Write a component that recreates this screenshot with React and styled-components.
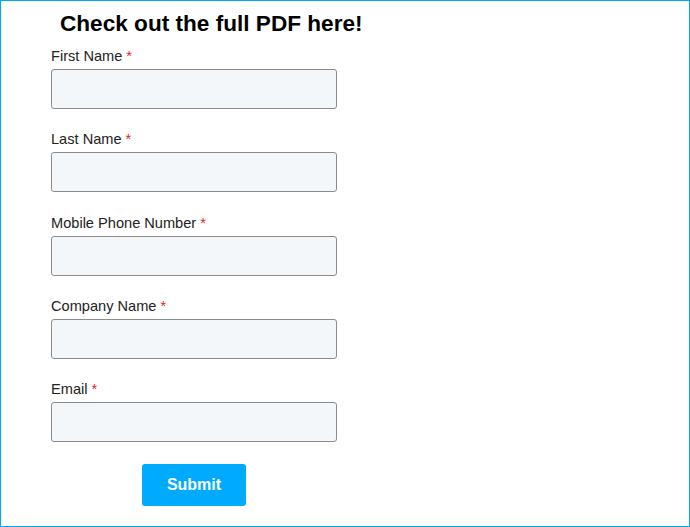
import React from "react";
import styled, { createGlobalStyle } from "styled-components";

const Global = createGlobalStyle`
  html, body { margin: 0; padding: 0; background: #fff; }
  body { font-family: "Liberation Sans", Arial, sans-serif; }
  * { box-sizing: border-box; }
`;

const Frame = styled.div`
  width: 690px;
  height: 527px;
  border: 1px solid #00a8f0;
  padding: 9px 0 0 50px;
  display: flex;
  flex-direction: column;
`;

const Title = styled.h1`
  margin: 0 0 10px 9px;
  font-size: 22.6px;
  line-height: 27px;
  font-weight: 700;
  color: #000;
`;

const Form = styled.form`
  width: 286px;
  display: flex;
  flex-direction: column;
  gap: 21.25px;
`;

const Field = styled.div`
  display: flex;
  flex-direction: column;
  gap: 3px;
`;

const Label = styled.label`
  display: block;
  font-size: 14.6px;
  line-height: 19px;
  height: 19px;
  color: #222;
`;

const Req = styled.span`
  color: #e0242c;
  margin-left: 4px;
`;

const Input = styled.input`
  display: block;
  width: 286px;
  height: 40px;
  border: 1px solid #8c8c8c;
  border-radius: 3px;
  background: #f4f7fa;
  font-family: inherit;
  font-size: 15px;
  padding: 0 10px;
  outline: none;
`;

const Actions = styled.div`
  display: flex;
  justify-content: center;
  padding-top: 1px;
`;

const Button = styled.button`
  width: 104px;
  height: 42px;
  border: none;
  border-radius: 3px;
  background: #00aaff;
  color: #fff;
  font-family: "Liberation Sans", Arial, sans-serif;
  font-weight: 700;
  font-size: 16px;
  cursor: pointer;
`;

const fields = [
  "First Name",
  "Last Name",
  "Mobile Phone Number",
  "Company Name",
  "Email",
];

export default function App() {
  return (
    <>
      <Global />
      <Frame>
        <Title>Check out the full PDF here!</Title>
        <Form onSubmit={(e) => e.preventDefault()}>
          {fields.map((f) => (
            <Field key={f}>
              <Label>
                {f}
                <Req>*</Req>
              </Label>
              <Input type="text" />
            </Field>
          ))}
          <Actions>
            <Button type="submit">Submit</Button>
          </Actions>
        </Form>
      </Frame>
    </>
  );
}
